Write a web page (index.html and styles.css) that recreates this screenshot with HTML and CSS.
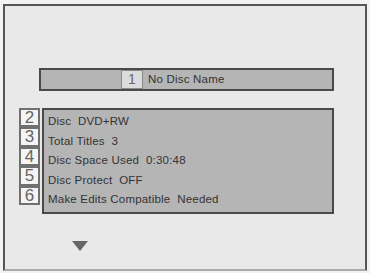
FILE: index.html
```html
<!DOCTYPE html>
<html lang="en">
<head>
    <meta charset="UTF-8">
    <title>Disc Info</title>
    <link rel="stylesheet" href="styles.css">
</head>
<body>
    <div class="screen">
        <div class="name-bar">
            <div class="num num-small">1</div>
            <span class="name">No Disc Name</span>
        </div>

        <div class="info">
            <div class="num-column">
                <div class="num">2</div>
                <div class="num">3</div>
                <div class="num">4</div>
                <div class="num">5</div>
                <div class="num">6</div>
            </div>
            <div class="panel">
                <p>Disc&nbsp; DVD+RW</p>
                <p>Total Titles&nbsp; 3</p>
                <p>Disc Space Used&nbsp; 0:30:48</p>
                <p>Disc Protect&nbsp; OFF</p>
                <p>Make Edits Compatible&nbsp; Needed</p>
            </div>
        </div>

        <div class="arrow-down"></div>
    </div>
</body>
</html>
```

FILE: styles.css
```css
* {
    padding: 0;
    margin: 0;
    box-sizing: border-box;
    font-family: "Liberation Sans", Arial, sans-serif;
}

body {
    width: 370px;
    height: 273px;
    background-color: #f2f2f2;
    padding: 4px 3px 0 3px;
}

.screen {
    width: 364px;
    height: 267px;
    border: 2px solid #555;
    border-bottom-color: #aaa;
    background-color: #e9e9e9;
    padding-top: 62px;
}

.name-bar {
    display: flex;
    align-items: stretch;
    width: 295px;
    height: 23px;
    margin-left: 34px;
    border: 2px solid #4a4a4a;
    background-color: #b5b5b5;
    padding-left: 80px;
}

.name {
    font-size: 11.5px;
    letter-spacing: 0.2px;
    color: #333;
    line-height: 19px;
    margin-left: 5px;
}

.num {
    width: 21px;
    height: 19.4px;
    border: 2px solid #707070;
    background-color: #f4f4f4;
    color: #666;
    font-size: 17px;
    line-height: 15px;
    text-align: center;
}

.num-small {
    width: 22px;
    height: auto;
    border: 1px solid #8a8a8a;
    background-color: #dcdcdc;
    font-size: 14px;
    line-height: 17px;
}

.info {
    display: flex;
    margin-top: 17px;
    margin-left: 14px;
}

.num-column {
    display: flex;
    flex-direction: column;
    width: 21px;
}

.panel {
    width: 292px;
    height: 106px;
    margin-left: 2px;
    border: 2px solid #4a4a4a;
    background-color: #b5b5b5;
    padding: 2px 0 0 4px;
}

.panel p {
    font-size: 11.5px;
    letter-spacing: 0.2px;
    color: #333;
    height: 19.5px;
    line-height: 19.5px;
}

.arrow-down {
    width: 0;
    height: 0;
    margin-top: 27px;
    margin-left: 67px;
    border-left: 8px solid transparent;
    border-right: 8px solid transparent;
    border-top: 10px solid #666;
}
```
